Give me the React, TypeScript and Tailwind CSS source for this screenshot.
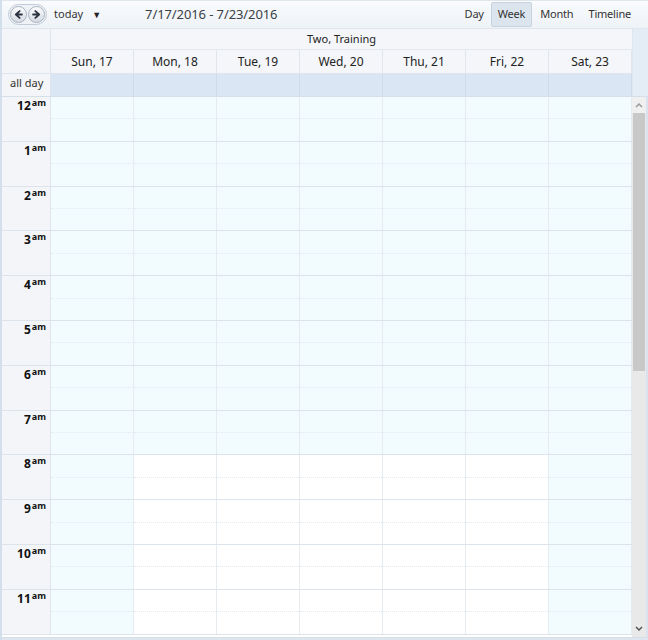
import React from 'react';

const days = ['Sun, 17', 'Mon, 18', 'Tue, 19', 'Wed, 20', 'Thu, 21', 'Fri, 22', 'Sat, 23'];
const hours = ['12', '1', '2', '3', '4', '5', '6', '7', '8', '9', '10', '11'];

function NavButtons() {
  return (
    <div className="flex items-center rounded-full border border-[#c3ccd6] bg-[#eef1f5] p-[1px] gap-[1px]">
      {['M10 4L5 8.5L10 13M5.5 8.5H13', 'M7 4L12 8.5L7 13M11.5 8.5H4'].map((d) => (
        <span
          key={d}
          className="flex h-[17px] w-[17px] items-center justify-center rounded-full border border-[#a8b3c0] bg-gradient-to-b from-[#fbfcfd] to-[#d5dbe3]"
        >
          <svg width="13" height="13" viewBox="0 0 17 17">
            <path d={d} fill="none" stroke="#2b3340" strokeWidth="2.4" strokeLinecap="round" strokeLinejoin="round" />
          </svg>
        </span>
      ))}
    </div>
  );
}

function Toolbar() {
  return (
    <div className="flex h-[29px] items-center border-t border-b border-[#dfe6ee] bg-gradient-to-b from-[#f9fbfd] to-[#eef3f8] pl-[6px] pr-[17px] text-[11px] text-[#333]">
      <NavButtons />
      <span className="ml-[7px]">today</span>
      <span className="ml-[9px] text-[9px] text-[#222]">▼</span>
      <span className="ml-[44px] text-[13px] tracking-[-0.1px] text-[#3a3f46]">7/17/2016 - 7/23/2016</span>
      <div className="ml-auto flex items-center tracking-[-0.2px]">
        <span className="px-[7px]">Day</span>
        <span className="rounded-[2px] border border-[#c7d3df] bg-[#dce5ee] px-[6px] py-[3px]">Week</span>
        <span className="px-[8px]">Month</span>
        <span className="pl-[7px]">Timeline</span>
      </div>
    </div>
  );
}

function Header() {
  return (
    <div className="flex border-b border-[#d6dee8] text-[11px] text-[#222]">
      <div className="flex w-[49px] shrink-0 flex-col border-r border-[#dfe5ec] bg-[#f3f5f8]">
        <div className="h-[44px]" />
        <div className="flex h-[23px] items-start border-t border-[#dfe5ec] pl-[8px] pt-[1px] text-[#333]">all day</div>
      </div>
      <div className="flex w-[581px] flex-col">
        <div className="flex h-[21px] items-center justify-center border-b border-[#e3e8ee] bg-[#f4f6f9]">Two, Training</div>
        <div className="flex h-[23px] bg-[#f4f6f9]">
          {days.map((d) => (
            <div key={d} className="flex w-[83px] items-center justify-center border-r border-[#e1e6ec] text-[12px]">
              {d}
            </div>
          ))}
        </div>
        <div className="flex h-[23px] border-t border-[#dfe5ec] bg-[#dae6f3]">
          {days.map((d) => (
            <div key={d} className="w-[83px] border-r border-[#cfdbe8]" />
          ))}
        </div>
      </div>
      <div className="flex-1 border-l border-[#dfe5ec] bg-[#e4ecf5]" />
    </div>
  );
}

function Grid() {
  return (
    <div className="flex h-[540px] overflow-hidden">
      <div className="flex w-[630px] flex-col">
        {hours.map((h, hi) => (
          <div key={h} className="flex h-[44.8px] shrink-0 border-b border-[#dde3ea]">
            <div className="flex w-[49px] shrink-0 items-start justify-end border-r border-[#dfe5ec] bg-[#f3f5f8] pr-[4px] pt-[2px] font-bold leading-[14px] text-[#111]">
              <span className="text-[12px]">{h}</span>
              <span className="ml-[1px] -mt-[3px] text-[9px] font-bold">am</span>
            </div>
            {days.map((d, di) => {
              const off = hi < 8 || di === 0 || di === 6;
              return (
                <div
                  key={d}
                  className={`flex w-[83px] flex-col border-r border-[#e6ebf0] ${off ? 'bg-[#f2fbfd]' : 'bg-white'}`}
                >
                  <div className="flex-1 border-b border-dotted border-[#e4eaf0]" />
                  <div className="flex-1" />
                </div>
              );
            })}
          </div>
        ))}
      </div>
      <div className="flex w-[14px] flex-col bg-[#e9e9e9]">
        <div className="flex h-[16px] items-center justify-center bg-[#f0f0f0]">
          <svg width="8" height="6" viewBox="0 0 8 6">
            <path d="M1 5L4 2L7 5" fill="none" stroke="#9a9a9a" strokeWidth="1.5" />
          </svg>
        </div>
        <div className="mx-[1px] h-[258px] bg-[#c8c8c8]" />
        <div className="flex-1" />
        <div className="flex h-[16px] items-center justify-center">
          <svg width="8" height="6" viewBox="0 0 8 6">
            <path d="M1 1L4 4L7 1" fill="none" stroke="#555" strokeWidth="1.5" />
          </svg>
        </div>
      </div>
      <div className="flex-1 bg-[#d8e3ef]" />
    </div>
  );
}

export default function App() {
  return (
    <div
      className="flex h-[640px] w-[648px] flex-col overflow-hidden border-l-2 border-[#d3dfec] bg-white"
      style={{ fontFamily: '"Noto Sans", "Open Sans", sans-serif' }}
    >
      <Toolbar />
      <Header />
      <Grid />
      <div className="flex-1 border-t border-[#d6dee8] bg-[#dde5ee]" />
    </div>
  );
}
